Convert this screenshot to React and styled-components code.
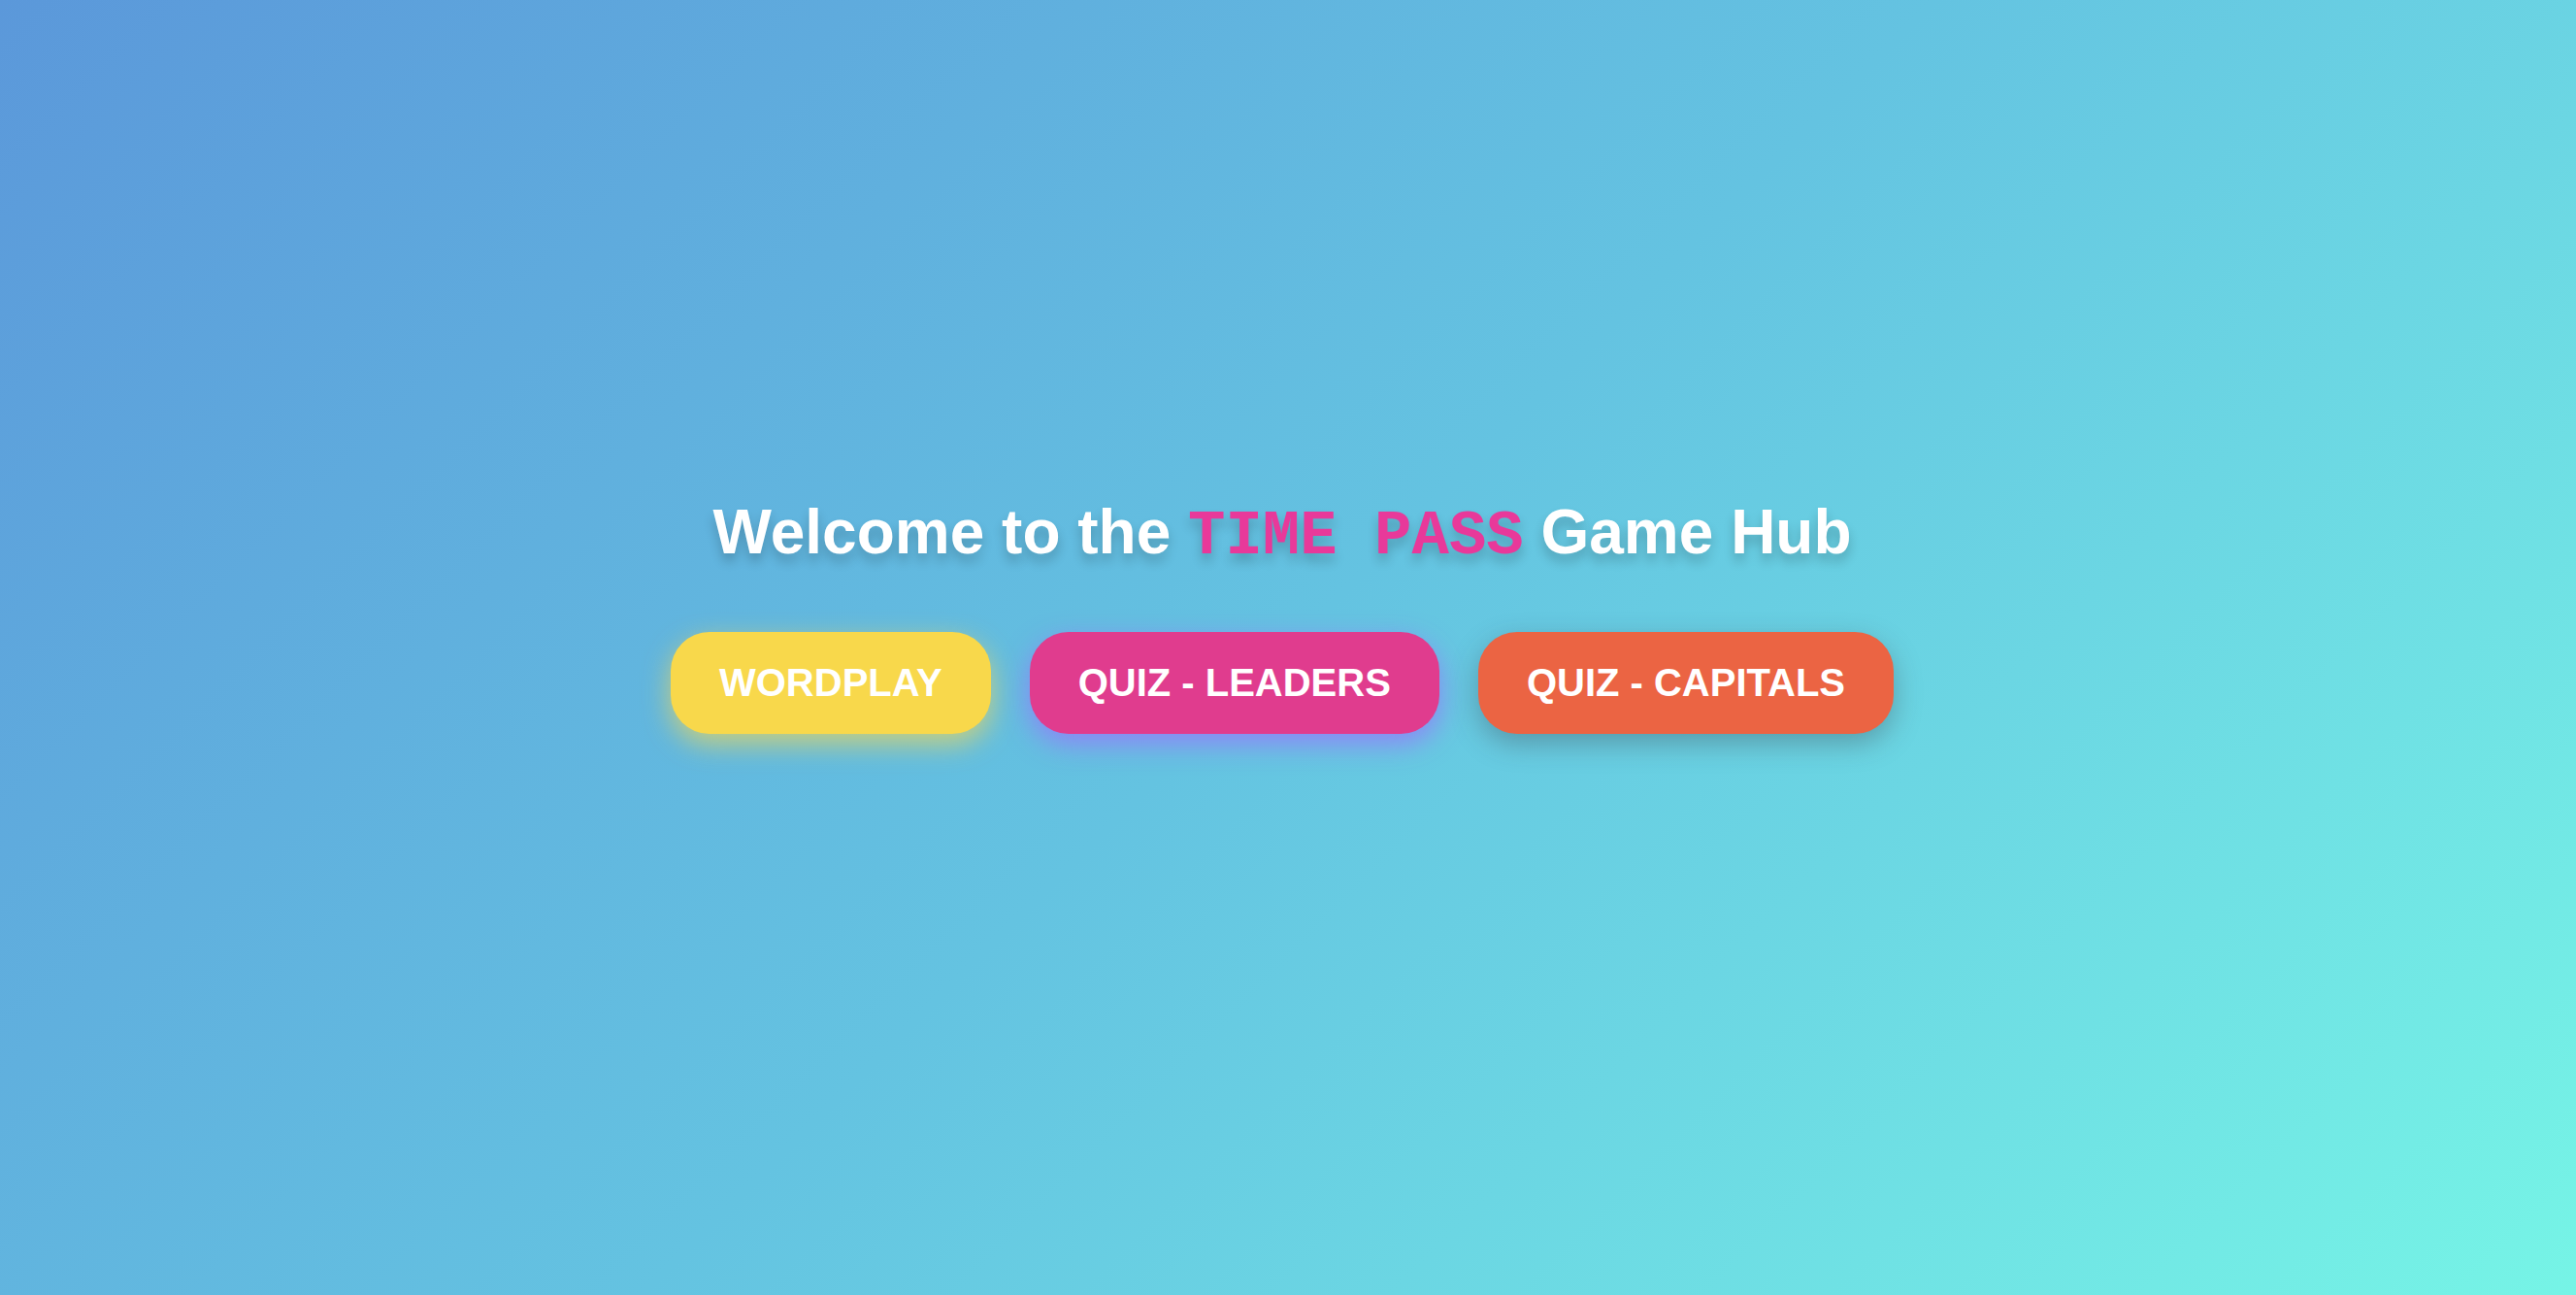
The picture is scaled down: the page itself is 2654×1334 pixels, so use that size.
import React from "react";
import styled, { createGlobalStyle } from "styled-components";

const GlobalStyle = createGlobalStyle`
  html, body {
    margin: 0;
    padding: 0;
  }
  body {
    font-family: "Liberation Sans", Arial, sans-serif;
  }
`;

const Page = styled.div`
  min-height: 100vh;
  box-sizing: border-box;
  display: flex;
  flex-direction: column;
  align-items: center;
  justify-content: center;
  padding: 0 12px 67px 0;
  background: linear-gradient(135deg, #5b98da 0%, #64c3e1 50%, #76f4e6 100%);
`;

const Title = styled.h1`
  margin: 0 0 62px;
  font-size: 64px;
  font-weight: 700;
  color: #ffffff;
  text-shadow: 0 8px 12px rgba(0, 0, 0, 0.2);
  white-space: nowrap;
`;

const Brand = styled.span`
  font-family: "Liberation Mono", "Courier New", monospace;
  color: #e8399a;
  white-space: pre;
`;

const Buttons = styled.div`
  display: flex;
  gap: 40px;
`;

const GameButton = styled.button`
  font-family: "Liberation Sans", Arial, sans-serif;
  font-size: 40px;
  font-weight: 700;
  line-height: 46px;
  color: #ffffff;
  background: ${p => p.bg};
  border: none;
  border-radius: 40px;
  padding: 29px 50px 30px;
  box-shadow: 0 10px 28px ${p => p.glow};
  cursor: pointer;
`;

const games = [
  { label: "WORDPLAY", bg: "#f8d84b", glow: "rgba(238, 214, 90, 0.75)" },
  { label: "QUIZ - LEADERS", bg: "#e03c8e", glow: "rgba(150, 120, 250, 0.85)" },
  { label: "QUIZ - CAPITALS", bg: "#eb6443", glow: "rgba(60, 60, 70, 0.35)" },
];

export default function App() {
  return (
    <>
      <GlobalStyle />
      <Page>
        <Title>
          Welcome to the <Brand>TIME PASS</Brand> Game Hub
        </Title>
        <Buttons>
          {games.map(g => (
            <GameButton key={g.label} bg={g.bg} glow={g.glow}>
              {g.label}
            </GameButton>
          ))}
        </Buttons>
      </Page>
    </>
  );
}
